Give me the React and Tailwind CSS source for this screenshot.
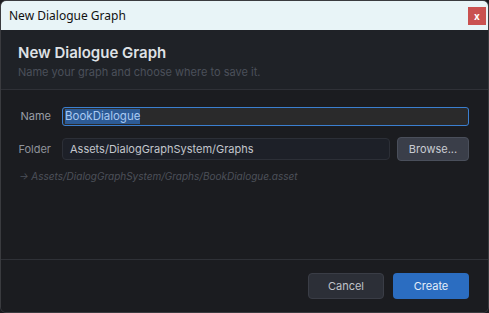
import React from "react";

function App() {
  return (
    <div className="w-[489px] h-[313px] bg-[#1b1c20]">
      <div className="flex h-full flex-col overflow-hidden rounded-[6px] border border-[#3a3b3f] font-['Inter',sans-serif]">
        <div className="flex h-[29px] shrink-0 items-center justify-between bg-[#e8f4f7] pl-[8px] pr-[2px]">
          <span className="font-['Noto_Sans',sans-serif] text-[12px] text-[#111]">
            New Dialogue Graph
          </span>
          <button className="flex h-[18px] w-[18px] items-center justify-center bg-[#c95150] text-[10px] font-bold leading-none text-white">
            x
          </button>
        </div>

        <div className="h-[60px] shrink-0 border-b border-[#2f3137] bg-[#1f2227] px-[17px] pt-[14px]">
          <h1 className="text-[15px] font-semibold leading-[18px] text-[#dfe1e5]">
            New Dialogue Graph
          </h1>
          <p className="mt-[3px] text-[11px] leading-[14px] text-[#4b505a]">
            Name your graph and choose where to save it.
          </p>
        </div>

        <div className="flex flex-1 flex-col gap-[11px] bg-[#1b1c20] pl-[17px] pr-[19px] pt-[17px] text-[11px]">
          <div className="flex items-center gap-[11px]">
            <span className="w-[33px] text-right text-[#9a9ea6]">Name</span>
            <div className="flex h-[19px] flex-1 items-center rounded-[3px] border border-[#3b7fd0] bg-[#2a2a2b] px-[2px]">
              <span className="bg-[#2d5b96] text-[11.5px] leading-[15px] text-[#a9c9f2]">BookDialogue</span>
            </div>
          </div>

          <div className="flex items-center gap-[11px]">
            <span className="w-[33px] text-right text-[#8f939b]">Folder</span>
            <div className="flex h-[22px] flex-1 items-center rounded-[4px] border border-[#2c2f37] bg-[#1d2028] px-[7px] text-[#c3c6cc]">
              Assets/DialogGraphSystem/Graphs
            </div>
            <button className="ml-[-4px] h-[24px] w-[72px] rounded-[4px] border border-[#4a4f5b] bg-[#3a3e49] text-[#c9ccd2]">
              Browse...
            </button>
          </div>

          <p className="mt-[-3px] pl-[1px] text-[10px] italic text-[#4d515a]">
            → Assets/DialogGraphSystem/Graphs/BookDialogue.asset
          </p>
        </div>

        <div className="flex h-[53px] shrink-0 items-center justify-end gap-[9px] border-t border-[#2f3137] bg-[#1b1c20] pr-[19px]">
          <button className="h-[26px] w-[76px] rounded-[4px] border border-[#3a3d46] bg-[#2c2f37] text-[11px] text-[#c0c3c9]">
            Cancel
          </button>
          <button className="h-[26px] w-[76px] rounded-[4px] bg-[#2b6dc1] text-[11px] text-[#e4edf9]">
            Create
          </button>
        </div>
      </div>
    </div>
  );
}

export default App;
